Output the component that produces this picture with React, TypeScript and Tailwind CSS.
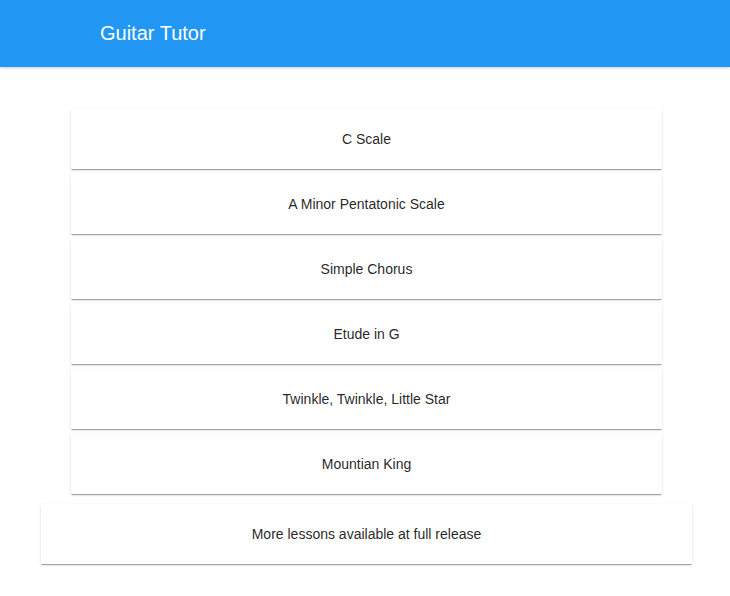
import React from 'react';

const lessons = [
  'C Scale',
  'A Minor Pentatonic Scale',
  'Simple Chorus',
  'Etude in G',
  'Twinkle, Twinkle, Little Star',
  'Mountian King',
];

const cardShadow =
  'shadow-[0_2px_1px_-1px_rgba(0,0,0,0.2),0_1px_1px_0_rgba(0,0,0,0.14),0_1px_3px_0_rgba(0,0,0,0.12)]';

export default function App() {
  return (
    <div className="min-h-screen bg-white font-['Liberation_Sans',Arial,sans-serif]">
      <header className="h-[67px] bg-[#2196f3] flex items-center pl-[100px] pb-[2px] shadow-[0_1px_3px_0_rgba(0,0,0,0.2)]">
        <h1 className="text-white text-[20px] leading-none">Guitar Tutor</h1>
      </header>
      <main className="pt-[42px] pb-8">
        <div className="flex flex-col gap-[5px] ml-[71px] w-[591px]">
          {lessons.map((name) => (
            <div
              key={name}
              className={`h-[60px] bg-white rounded-[1px] flex items-center justify-center text-[14px] text-[rgba(0,0,0,0.87)] ${cardShadow}`}
            >
              {name}
            </div>
          ))}
        </div>
        <div
          className={`mt-[10px] ml-[41px] w-[651px] h-[60px] bg-white rounded-[1px] flex items-center justify-center text-[14px] text-[rgba(0,0,0,0.87)] ${cardShadow}`}
        >
          More lessons available at full release
        </div>
      </main>
    </div>
  );
}
